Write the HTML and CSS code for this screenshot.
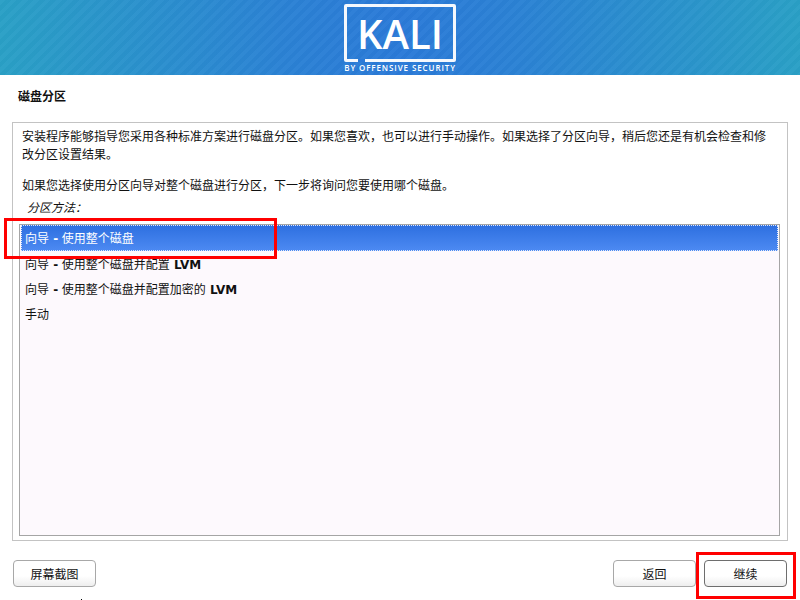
FILE: index.html
```html
<!DOCTYPE html>
<html lang="zh-CN">
<head>
    <meta charset="UTF-8">
    <meta name="viewport" content="width=device-width, initial-scale=1.0">
    <title>磁盘分区</title>
    <link rel="stylesheet" href="styles.css">
</head>
<body>
    <div class="banner">
        <div class="logo">
            <div class="logo-box">
                <span class="logo-name">KALI</span>
                <span class="logo-gap"></span>
            </div>
            <div class="logo-sub">BY OFFENSIVE SECURITY</div>
        </div>
    </div>

    <h1 class="page-title">磁盘分区</h1>

    <div class="frame">
        <p class="intro">安装程序能够指导您采用各种标准方案进行磁盘分区。如果您喜欢，也可以进行手动操作。如果选择了分区向导，稍后您还是有机会检查和修改分区设置结果。</p>
        <p class="intro intro-second">如果您选择使用分区向导对整个磁盘进行分区，下一步将询问您要使用哪个磁盘。</p>
        <div class="list-label">分区方法：</div>
        <div class="method-list">
            <div class="method selected">向导 <b>-</b> 使用整个磁盘</div>
            <div class="method">向导 <b>-</b> 使用整个磁盘并配置 <b>LVM</b></div>
            <div class="method">向导 <b>-</b> 使用整个磁盘并配置加密的 <b>LVM</b></div>
            <div class="method">手动</div>
        </div>
    </div>

    <div class="actions">
        <button class="btn">屏幕截图</button>
        <div class="actions-right">
            <button class="btn">返回</button>
            <button class="btn btn-focus">继续</button>
        </div>
    </div>

    <div class="mark mark-method"></div>
    <div class="mark mark-continue"></div>
    <div class="cursor-dot"></div>
</body>
</html>
```

FILE: styles.css
```css
* {
    box-sizing: border-box;
}

html, body {
    height: 100%;
}

body {
    margin: 0;
    position: relative;
    overflow: hidden;
    background: #fff;
    color: #111;
    font-family: "Liberation Sans", "Noto Sans CJK SC", sans-serif;
    font-size: 12px;
}

.banner {
    height: 75px;
    background:
        repeating-linear-gradient(135deg, rgba(255, 255, 255, 0.025) 0 4px, rgba(0, 0, 0, 0.015) 4px 8px),
        linear-gradient(to right, #2aa0c6 0%, #2b82d4 35%, #2b7ad8 50%, #2b82d4 65%, #2aa0c6 100%);
    display: flex;
    justify-content: center;
}

.logo {
    width: 112px;
    margin-top: 4px;
    color: #fff;
}

.logo-box {
    height: 58px;
    border: 3px solid #f4f8fd;
    border-radius: 2px;
    position: relative;
    display: flex;
    justify-content: center;
    align-items: center;
}

.logo-name {
    font-family: "Open Sans", sans-serif;
    font-size: 40px;
    font-weight: 600;
    line-height: 1;
    padding-top: 1px;
}

.logo-gap {
    position: absolute;
    left: 11px;
    bottom: -3px;
    width: 7px;
    height: 3px;
    background: #2b7ad8;
}

.logo-sub {
    font-family: "Open Sans", sans-serif;
    font-size: 8px;
    font-weight: 600;
    line-height: 9px;
    margin-top: 1px;
    letter-spacing: 0.9px;
    text-align: center;
    white-space: nowrap;
}

.page-title {
    margin: 0;
    height: 47px;
    padding: 15px 0 0 18px;
    font-size: 12px;
    line-height: 14px;
    font-weight: bold;
}

.frame {
    margin: 0 12px;
    height: 419px;
    border: 1px solid #c3c3c3;
    padding: 5px 7px 4px 6px;
    display: flex;
    flex-direction: column;
}

.intro {
    margin: 0;
    padding: 0 10px 0 3px;
    line-height: 18px;
}

.intro-second {
    margin-top: 13px;
    padding-right: 3px;
}

.list-label {
    margin: 4px 0 0 8px;
    height: 25px;
    line-height: 18px;
    font-style: italic;
}

.method-list {
    flex: 1;
    border: 1px solid #a5a5a5;
    background: #fdf9fd;
    padding: 0 1px;
}

.method {
    height: 25px;
    line-height: 25px;
    padding: 2px 0 0 4px;
}

.method b {
    font-family: "DejaVu Sans", sans-serif;
    font-size: 12px;
    margin-left: 1px;
}

.selected {
    height: 26px;
    background: linear-gradient(to bottom, #2d6fe0, #4d8af2);
    outline: 1px dotted #dfe8fb;
    outline-offset: -1px;
    color: #fff;
}

.actions {
    display: flex;
    justify-content: space-between;
    padding: 19px 13px 0;
}

.actions-right {
    display: flex;
    gap: 8px;
}

.btn {
    width: 83px;
    height: 27px;
    padding: 0;
    border: 1px solid #a8a8a8;
    border-radius: 4px;
    background: linear-gradient(to bottom, #fff 0%, #fff 60%, #eeeeee 100%);
    color: #111;
    font: inherit;
}

.btn-focus {
    border-color: #6e6e6e;
}

.mark {
    position: absolute;
    border: 3px solid #f00;
}

.mark-method {
    left: 4px;
    top: 218px;
    width: 273px;
    height: 41px;
}

.mark-continue {
    left: 696px;
    top: 552px;
    width: 100px;
    height: 47px;
}

.cursor-dot {
    position: absolute;
    left: 81px;
    top: 599px;
    width: 1px;
    height: 1px;
    background: #000;
}
```
